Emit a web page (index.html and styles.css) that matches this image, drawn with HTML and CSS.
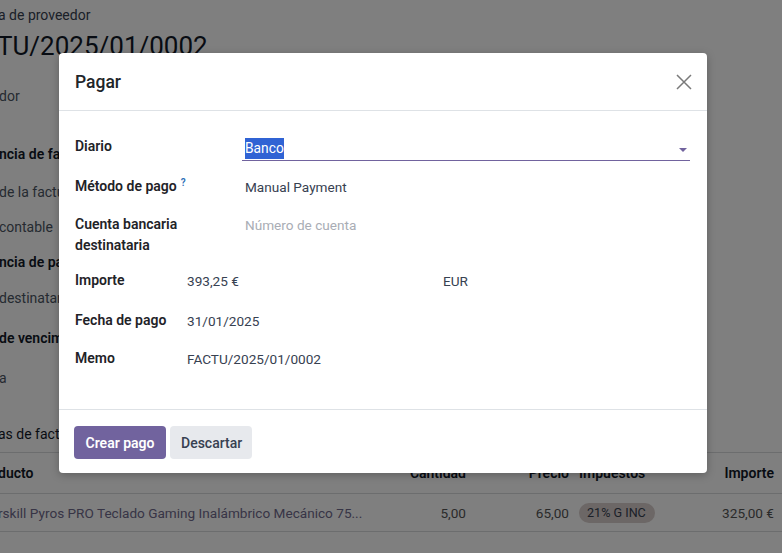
FILE: index.html
```html
<!DOCTYPE html>
<html lang="es">
<head>
<meta charset="utf-8">
<title>Pagar</title>
<link rel="stylesheet" href="styles.css">
</head>
<body>
<div class="page">
  <div class="crumb">a de proveedor</div>
  <div class="docname">TU/2025/01/0002</div>
  <div class="fields">
    <div class="flabel">dor</div>
    <div class="flabel strong">ncia de fac</div>
    <div class="flabel">de la factu</div>
    <div class="flabel">contable</div>
    <div class="flabel strong">ncia de pa</div>
    <div class="flabel">destinatar</div>
    <div class="flabel strong">de vencim</div>
    <div class="flabel">a</div>
  </div>
  <div class="tabs"><span class="tab">as de factu</span></div>
  <div class="lines">
    <div class="lrow lhead">
      <div class="c-prod">ducto</div>
      <div class="c-num">Cantidad</div>
      <div class="c-num">Precio</div>
      <div class="c-tax">Impuestos</div>
      <div class="c-tot">Importe</div>
    </div>
    <div class="lrow">
      <div class="c-prod prod">rskill Pyros PRO Teclado Gaming Inalámbrico Mecánico 75...</div>
      <div class="c-num">5,00</div>
      <div class="c-num">65,00</div>
      <div class="c-tax"><span class="tag">21% G INC</span></div>
      <div class="c-tot">325,00 €</div>
    </div>
  </div>
</div>

<div class="backdrop"></div>

<div class="modal" role="dialog">
  <header class="m-head">
    <h4 class="m-title">Pagar</h4>
    <button class="m-close" aria-label="Cerrar">
      <svg width="16" height="16" viewBox="0 0 16 16"><path d="M1 1 L15 15 M15 1 L1 15" stroke="#7a7a7a" stroke-width="1.5" fill="none"/></svg>
    </button>
  </header>
  <div class="m-body">
    <div class="grp grp1">
      <div class="lbl">Diario</div>
      <div class="inp">
        <span class="sel">Banco</span>
        <span class="caret"></span>
      </div>
      <div class="lbl r2">Método de pago<sup class="help">?</sup></div>
      <div class="val r2">Manual Payment</div>
      <div class="lbl r3">Cuenta bancaria<br>destinataria</div>
      <div class="val ph r3">Número de cuenta</div>
    </div>
    <div class="grp grp2">
      <div class="lbl">Importe</div>
      <div class="val2">393,25 €</div>
      <div class="val2">EUR</div>
      <div class="lbl r2">Fecha de pago</div>
      <div class="val2 r2">31/01/2025</div>
      <div class="r2"></div>
      <div class="lbl">Memo</div>
      <div class="val2">FACTU/2025/01/0002</div>
      <div></div>
    </div>
  </div>
  <footer class="m-foot">
    <button class="btn btn-primary">Crear pago</button>
    <button class="btn btn-secondary">Descartar</button>
  </footer>
</div>
</body>
</html>
```
FILE: styles.css
```css
* { box-sizing: border-box; }
html, body { margin: 0; height: 100%; }
body {
  font-family: Roboto, "Noto Sans", "Liberation Sans", sans-serif;
  font-size: 14px;
  color: #111827;
  background: #ffffff;
  overflow: hidden;
  position: relative;
}

/* background form */
.page { width: 782px; }
.crumb { margin-top: 5px; height: 20px; line-height: 20px; color: #374151; margin-left: -2px; }
.docname { margin-top: 4px; font-size: 26px; line-height: 34px; color: #111827; margin-left: -3px; }
.fields {
  margin-top: 23px;
  display: grid;
  grid-template-rows: 58px 38px 35px 35px 36px 40px 40px 20px;
}
.flabel { line-height: 20px; color: #4b5563; margin-left: -1px; }
.flabel.strong { color: #111827; font-weight: 600; }
.tabs {
  margin-top: 36px;
  padding-bottom: 8px;
  border-bottom: 1px solid #d8dadd;
  height: 29px;
}
.tab { line-height: 20px; color: #111827; margin-left: -2px; }
.lrow {
  display: grid;
  grid-template-columns: 380px 86px 103px 1fr 110px;
  align-items: center;
  border-bottom: 1px solid #d8dadd;
  height: 38px;
}
.lrow.lhead { height: 41px; font-weight: 600; color: #111827; }
.c-prod { white-space: nowrap; overflow: hidden; margin-left: -2px; }
.prod { color: #6f6a8c; font-size: 13.6px; }
.c-num { text-align: right; color: #555; font-size: 13.6px; }
.lhead .c-num { color: #111827; font-size: 14px; }
.c-tax { padding-left: 10px; }
.c-tot { text-align: right; padding-right: 8px; color: #555; font-size: 13.6px; }
.lhead .c-tot { color: #111827; font-size: 14px; }
.tag {
  display: inline-block;
  background: #d9cfcd;
  color: #374151;
  border-radius: 10px;
  padding: 0 9px 0 8px;
  line-height: 20px;
  font-size: 12.6px;
}

.backdrop { position: absolute; inset: 0; background: rgba(0,0,0,0.5); }

/* modal */
.modal {
  position: absolute;
  left: 59px; top: 53px;
  width: 648px;
  background: #fff;
  border-radius: 4px;
  box-shadow: 0 2px 8px rgba(0,0,0,0.25);
}
.m-head {
  height: 58px;
  border-bottom: 1px solid #dee2e6;
  display: flex;
  align-items: center;
  justify-content: space-between;
  padding: 0 15px 0 16px;
}
.m-title { margin: 0; font-size: 17.5px; font-weight: 500; color: #212529; }
.m-close { border: 0; background: none; padding: 0; width: 16px; height: 16px; display: flex; cursor: pointer; }

.m-body { padding: 25px 17px 40px 16px; }
.grp { display: grid; align-items: start; line-height: 21px; }
.grp1 { grid-template-columns: 167px 1fr; grid-template-rows: 40px 38px 42px; }
.grp2 { margin-top: 14px; grid-template-columns: 112px 256px 1fr; grid-template-rows: 40px 38px 21px; }
.lbl { font-weight: 600; color: #1f2328; }
.val, .val2 { color: #374151; padding-top: 1px; font-size: 13.6px; }
.val { padding-left: 3px; }
.ph { color: #a9adb5; }
.help { color: #2d6fb7; font-size: 10px; font-weight: 600; vertical-align: 5px; line-height: 0; margin-left: 4px; }
.inp {
  height: 25px;
  border-bottom: 1px solid #71639e;
  padding: 2px 3px 1px 3px;
  display: flex;
  align-items: center;
  justify-content: space-between;
  font-size: 13.8px;
}
.sel { background: #3063d4; color: #fff; }
.caret {
  width: 0; height: 0;
  border-left: 4px solid transparent;
  border-right: 4px solid transparent;
  border-top: 4px solid #71639e;
  margin-top: 2px;
}

.m-foot {
  border-top: 1px solid #dee2e6;
  padding: 16px 15px 14px;
  display: flex;
  gap: 4px;
}
.btn {
  font-family: inherit;
  font-size: 14px;
  height: 33px;
  border: 0;
  border-radius: 4px;
  padding: 0 11px;
  font-weight: 600;
  cursor: pointer;
}
.btn-primary { background: #71639e; color: #fff; padding: 0 11px 0 11px; width: 92px; }
.btn-secondary { background: #e7e9ed; color: #374151; font-weight: 500; width: 82px; }
```
